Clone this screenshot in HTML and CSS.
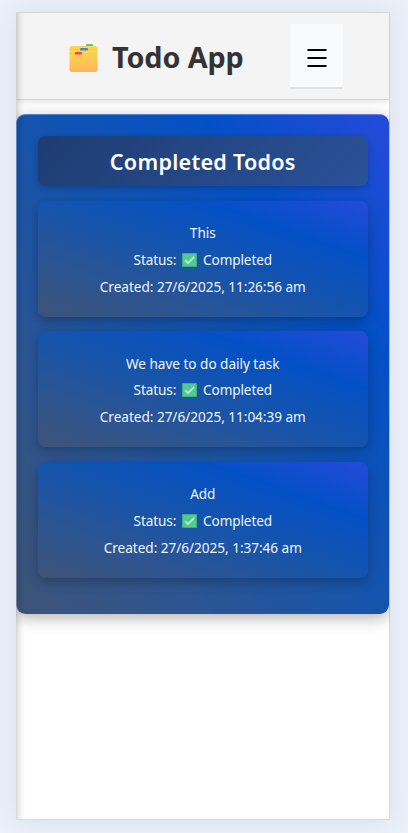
FILE: index.html
```
<!DOCTYPE html>
<html lang="en">
<head>
<meta charset="utf-8">
<title>Todo App</title>
<link rel="stylesheet" href="styles.css">
</head>
<body>
<svg class="defs" width="0" height="0" aria-hidden="true">
  <defs>
    <linearGradient id="folder" x1="0" y1="0" x2="0" y2="1"><stop offset="0" stop-color="#ffd54c"/><stop offset=".3" stop-color="#ffd251"/><stop offset="1" stop-color="#ffb557"/></linearGradient>
    <symbol id="check" viewBox="0 0 15 14">
      <rect width="15" height="14" rx=".5" fill="#3fae7c"/>
      <rect x="1" y="1" width="13" height="12" fill="#50cb93"/>
      <path d="M3.2 7.3 6 10 12 4" fill="none" stroke="#e3f5f1" stroke-width="1.4"/>
    </symbol>
  </defs>
</svg>
<div class="app">
  <header class="header">
    <h1 class="brand">
      <svg class="folder" viewBox="0 0 30 30" width="30" height="30" aria-hidden="true">
        <rect x="18" y="1" width="7" height="4" rx="1" fill="#50cb83"/>
        <path d="M1.500 5q0-2 2-2h24q2 0 2 2v22q0 2-2 2h-24q-2 0-2-2z" fill="url(#folder)"/>
        <path d="M2 6.500H29M2 10.500H29" stroke="#f8c044" stroke-width=".6"/>
        <rect x="12" y="5" width="8" height="2.600" rx="1" fill="#4b89c2"/>
        <rect x="7" y="9" width="7" height="2.600" rx="1" fill="#fc3e60"/>
      </svg>
      <span class="title">Todo App</span>
    </h1>
    <button class="menu" aria-label="Menu"><svg width="20" height="20" viewBox="0 0 20 20"><path d="M.5 2h19M.5 10h19M.5 18h19" stroke="#000" stroke-width="2"/></svg></button>
  </header>
  <main class="panel">
    <h2 class="heading"><span>Completed Todos</span></h2>
    <article class="todo">
      <p>This</p>
      <p class="status">Status: <svg class="check"><use href="#check"/></svg> Completed</p>
      <p>Created: 27/6/2025, 11:26:56 am</p>
    </article>
    <article class="todo">
      <p>We have to do daily task</p>
      <p class="status">Status: <svg class="check"><use href="#check"/></svg> Completed</p>
      <p>Created: 27/6/2025, 11:04:39 am</p>
    </article>
    <article class="todo">
      <p>Add</p>
      <p class="status">Status: <svg class="check"><use href="#check"/></svg> Completed</p>
      <p>Created: 27/6/2025, 1:37:46 am</p>
    </article>
  </main>
</div>
</body>
</html>
```
FILE: styles.css
```
* { box-sizing: border-box; margin: 0; padding: 0; }
body {
  height: 833px;
  padding: 12px 18px 13px 16px;
  background: #ecf0f9;
  font-family: "Segoe UI", "Noto Sans", sans-serif;
  overflow: hidden;
}
.defs { position: absolute; }
.app {
  position: relative;
  height: 808px;
  border: 1px solid #d9dadc;
  background: #fff;
  box-shadow: 0 0 24px rgba(60, 80, 120, .11);
  overflow: clip;
  overflow-clip-margin: border-box;
}
/* shadow cast by the closed side drawer */
.app::after {
  content: "";
  position: absolute;
  left: 0;
  top: 0;
  bottom: 0;
  width: 8px;
  background: linear-gradient(to right, rgba(0, 0, 0, .13), rgba(0, 0, 0, .04) 50%, transparent);
}
.header {
  display: flex;
  justify-content: space-between;
  align-items: flex-start;
  height: 87px;
  padding: 11px 46px 0 51px;
  background: #f4f4f4;
  border-bottom: 1px solid #d2d2d2;
  box-shadow: 0 2px 5px rgba(0, 0, 0, .1);
}
.brand {
  display: flex;
  align-items: center;
  gap: 14px;
  height: 68px;
  color: #333;
  font-size: 28.8px;
  font-weight: 700;
  white-space: nowrap;
}
.title { letter-spacing: -.12px; margin-bottom: 4px; }
.menu {
  display: flex;
  justify-content: center;
  align-items: center;
  width: 53px;
  height: 65px;
  padding-top: 5px;
  border: 0;
  border-bottom: 2px solid #e2e2e3;
  background: #f8fafc;
}
.panel {
  height: 500px;
  margin: 14px 0 0 -1px;
  padding: 21px 21px 0 20.600px;
  border: 1px solid rgba(255, 255, 255, .3);
  border-width: 1px 0 0 1px;
  border-radius: 9px;
  background: linear-gradient(to top right, #3d5377, #2c5592, #1554ad, #0350c6, #254adb) border-box;
  box-shadow: 0 4px 16px rgba(0, 0, 0, .3);
  color: #fff;
}
.heading {
  display: flex;
  justify-content: center;
  align-items: center;
  height: 50px;
  margin-bottom: 15px;
  border-radius: 7px;
  background: linear-gradient(135deg, #1e3c72, #2a5298);
  box-shadow: 0 2px 6px rgba(0, 0, 0, .22);
  font-size: 21.6px;
  font-weight: 600;
  letter-spacing: .25px;
}
.todo {
  height: 116px;
  margin-bottom: 14.400px;
  padding-top: 19.300px;
  border-radius: 8px;
  background: linear-gradient(to top right, #3d5377, #2c5592, #1554ad, #0350c6, #254adb);
  box-shadow: 0 4px 12px rgba(0, 0, 0, .25);
  color: #f0f4fb;
  font-size: 13.600px;
  line-height: 26.800px;
  text-align: center;
}
.todo p { height: 26.800px; letter-spacing: -.03px; white-space: nowrap; }
.todo .status { letter-spacing: -.12px; }
.check { width: 15px; height: 14px; margin: 0 3px 0 2px; vertical-align: -2px; }
```
